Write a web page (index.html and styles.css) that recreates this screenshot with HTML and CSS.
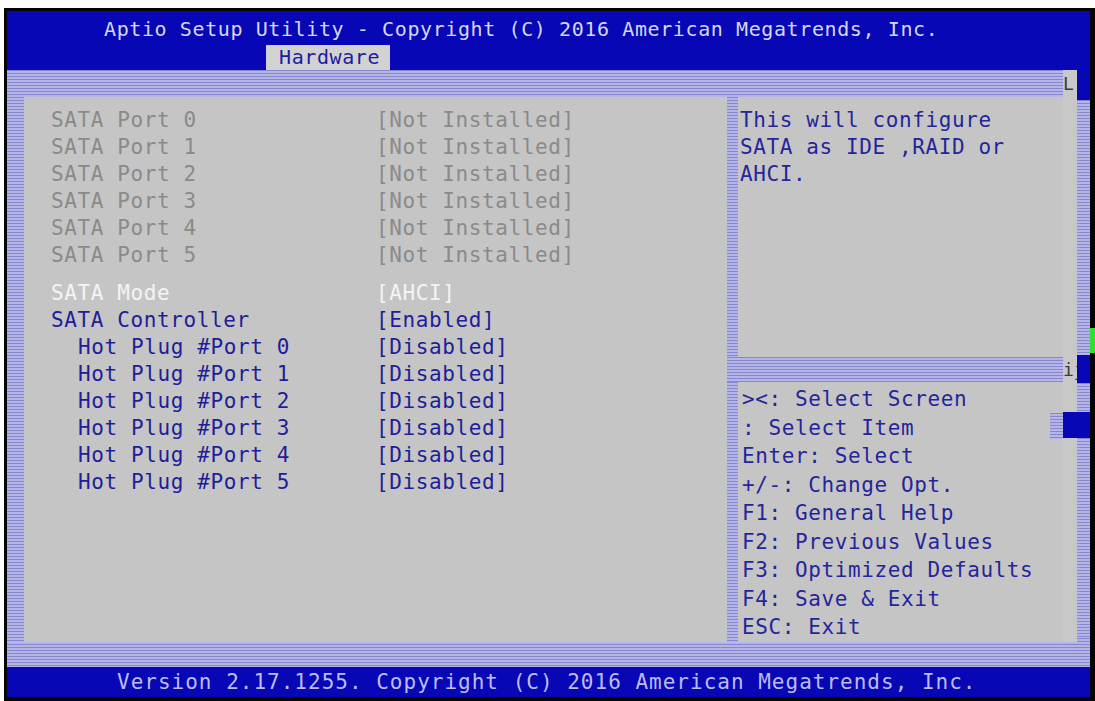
FILE: index.html
```html
<!DOCTYPE html>
<html lang="en">
<head>
  <meta charset="UTF-8">
  <meta name="viewport" content="width=device-width, initial-scale=1.0">
  <title>Aptio Setup Utility</title>
  <link rel="stylesheet" href="styles.css">
</head>
<body>
  <div class="screen">
    <div class="screen-body">
      <header class="top">
        <div class="title">Aptio Setup Utility - Copyright (C) 2016 American Megatrends, Inc.</div>
        <div class="tabs"><span class="tab">Hardware</span></div>
      </header>

      <div class="frame">
        <div class="frame-main">
          <div class="frame-inner">
            <div class="band-top">
              <div class="band"></div>
              <div class="corner">L</div>
            </div>
            <div class="frame-mid">
              <div class="strip strip-left"></div>

              <main class="items">
                <div class="row off"><span>SATA Port 0</span><span>[Not Installed]</span></div>
                <div class="row off"><span>SATA Port 1</span><span>[Not Installed]</span></div>
                <div class="row off"><span>SATA Port 2</span><span>[Not Installed]</span></div>
                <div class="row off"><span>SATA Port 3</span><span>[Not Installed]</span></div>
                <div class="row off"><span>SATA Port 4</span><span>[Not Installed]</span></div>
                <div class="row off"><span>SATA Port 5</span><span>[Not Installed]</span></div>
                <div class="spacer"></div>
                <div class="row active"><span>SATA Mode</span><span>[AHCI]</span></div>
                <div class="row"><span>SATA Controller</span><span>[Enabled]</span></div>
                <div class="row sub"><span>Hot Plug #Port 0</span><span>[Disabled]</span></div>
                <div class="row sub"><span>Hot Plug #Port 1</span><span>[Disabled]</span></div>
                <div class="row sub"><span>Hot Plug #Port 2</span><span>[Disabled]</span></div>
                <div class="row sub"><span>Hot Plug #Port 3</span><span>[Disabled]</span></div>
                <div class="row sub"><span>Hot Plug #Port 4</span><span>[Disabled]</span></div>
                <div class="row sub"><span>Hot Plug #Port 5</span><span>[Disabled]</span></div>
              </main>

              <aside class="side">
                <div class="side-top">
                  <div class="strip strip-thin"></div>
                  <div class="desc">
                    <div>This will configure</div>
                    <div>SATA as IDE ,RAID or</div>
                    <div>AHCI.</div>
                  </div>
                </div>
                <div class="band side-sep"></div>
                <div class="side-bottom">
                  <div class="strip strip-thin"></div>
                  <ul class="keys">
                    <li>&gt;&lt;: Select Screen</li>
                    <li>: Select Item<span class="chip"></span></li>
                    <li>Enter: Select</li>
                    <li>+/-: Change Opt.</li>
                    <li>F1: General Help</li>
                    <li>F2: Previous Values</li>
                    <li>F3: Optimized Defaults</li>
                    <li>F4: Save &amp; Exit</li>
                    <li>ESC: Exit</li>
                  </ul>
                </div>
              </aside>

              <div class="gutter">
                <div class="gutter-gap"></div>
                <div class="gutter-ij">ij</div>
                <div class="gutter-pad"></div>
                <div class="gutter-thumb"></div>
              </div>
            </div>
          </div>

          <div class="rail">
            <div class="rail-blue rail-head"></div>
            <div class="band rail-hatch-a"></div>
            <div class="rail-blue rail-mid"></div>
            <div class="band rail-hatch-b"></div>
            <div class="rail-blue rail-thumb"></div>
            <div class="band rail-rest"></div>
          </div>
        </div>
        <div class="band band-bottom"></div>
      </div>

      <footer class="bottom">Version 2.17.1255. Copyright (C) 2016 American Megatrends, Inc.</footer>
    </div>
    <div class="edge"><span class="edge-mark"></span></div>
  </div>
</body>
</html>
```

FILE: styles.css
```css
body {
  margin: 0;
  padding: 8px 0 0 4px;
  background-color: #ffffff;
  font-family: "DejaVu Sans Mono", "Liberation Mono", monospace;
}

.screen {
  display: flex;
  width: 1088px;
  border-left: 3px solid #050505;
  border-top: 3px solid #050505;
  border-bottom: 4px solid #050505;
  background-color: #050505;
}

.screen-body {
  width: 1083px;
  display: flex;
  flex-direction: column;
}

/* header */
.top {
  height: 59px;
  box-sizing: border-box;
  padding-top: 4px;
  background-color: #0707b6;
}

.title {
  height: 28px;
  line-height: 28px;
  padding-left: 97px;
  font-size: 20px;
  letter-spacing: 0.6px;
  color: #d6d6ee;
  white-space: nowrap;
}

.tabs {
  margin-top: 2px;
  padding-left: 259px;
}

.tab {
  display: inline-block;
  width: 124px;
  height: 25px;
  box-sizing: border-box;
  padding-left: 13px;
  line-height: 25px;
  font-size: 20px;
  letter-spacing: 0.6px;
  background-color: #d2d2d2;
  color: #1c1ca4;
}

/* hatched frame */
.band,
.strip {
  background-color: #a0a0dc;
  background-image: repeating-linear-gradient(to bottom, #8686d2 0, #8686d2 1px, #b6b6e6 1px, #b6b6e6 3px);
}

.frame-main {
  display: flex;
  height: 568px;
}

.frame-inner {
  width: 1070px;
  display: flex;
  flex-direction: column;
}

.band-top {
  display: flex;
  height: 27px;
}

.band-top .band {
  flex: 1;
}

.corner {
  width: 14px;
  background-color: #c8c8c8;
  color: #3c3c3c;
  font-size: 18px;
  line-height: 27px;
  overflow: hidden;
}

.frame-mid {
  display: flex;
  flex: 1;
  background-color: #c5c5c5;
}

.strip-left {
  width: 17px;
}

/* setup items */
.items {
  width: 703px;
  box-sizing: border-box;
  padding: 10px 0 0 27px;
  font-size: 21px;
  letter-spacing: 0.6px;
  color: #1e1e98;
}

.row {
  display: grid;
  grid-template-columns: 325px auto;
  height: 27px;
  line-height: 27px;
  white-space: nowrap;
}

.row.off {
  color: #8a8a8a;
}

.row.active {
  color: #f4f4f4;
}

.row.sub span:first-child {
  padding-left: 27px;
}

.spacer {
  height: 11px;
}

/* help panel */
.side {
  width: 336px;
  display: flex;
  flex-direction: column;
  font-size: 21px;
  letter-spacing: 0.6px;
  color: #25259a;
}

.side-top {
  display: flex;
  height: 260px;
}

.strip-thin {
  width: 11px;
  flex-shrink: 0;
}

.desc {
  padding: 10px 0 0 2px;
  line-height: 27px;
  white-space: nowrap;
}

.side-sep {
  height: 25px;
}

.side-bottom {
  display: flex;
  flex: 1;
}

.keys {
  flex: 1;
  list-style: none;
  margin: 0;
  padding: 3px 0 0 4px;
  line-height: 28.5px;
  white-space: nowrap;
}

.chip {
  float: right;
  width: 13px;
  height: 26px;
  margin-top: -1px;
  background-image: repeating-linear-gradient(to bottom, #8686d2 0, #8686d2 1px, #b6b6e6 1px, #b6b6e6 3px);
}

.gutter {
  width: 14px;
  display: flex;
  flex-direction: column;
  background-color: #c8c8c8;
}

.gutter-gap {
  height: 260px;
}

.gutter-ij {
  height: 25px;
  line-height: 25px;
  font-size: 18px;
  color: #3c3c3c;
}

.gutter-pad {
  height: 30px;
}

.gutter-thumb {
  height: 26px;
  background-color: #0707b6;
}

/* right rail */
.rail {
  width: 13px;
  display: flex;
  flex-direction: column;
}

.rail-blue {
  background-color: #0707b6;
}

.rail-head {
  height: 30px;
}

.rail-hatch-a {
  height: 255px;
}

.rail-mid {
  height: 28px;
}

.rail-hatch-b {
  height: 29px;
}

.rail-thumb {
  height: 26px;
}

.rail-rest {
  flex: 1;
}

.band-bottom {
  height: 29px;
}

/* footer */
.bottom {
  height: 30px;
  line-height: 30px;
  padding-left: 110px;
  background-color: #0707b6;
  color: #bcbcf0;
  font-size: 21px;
  letter-spacing: 1px;
  white-space: nowrap;
}

.edge {
  width: 5px;
  background-color: #050505;
}

.edge-mark {
  display: block;
  margin-top: 317px;
  height: 25px;
  background-color: #2fe02f;
}
```
